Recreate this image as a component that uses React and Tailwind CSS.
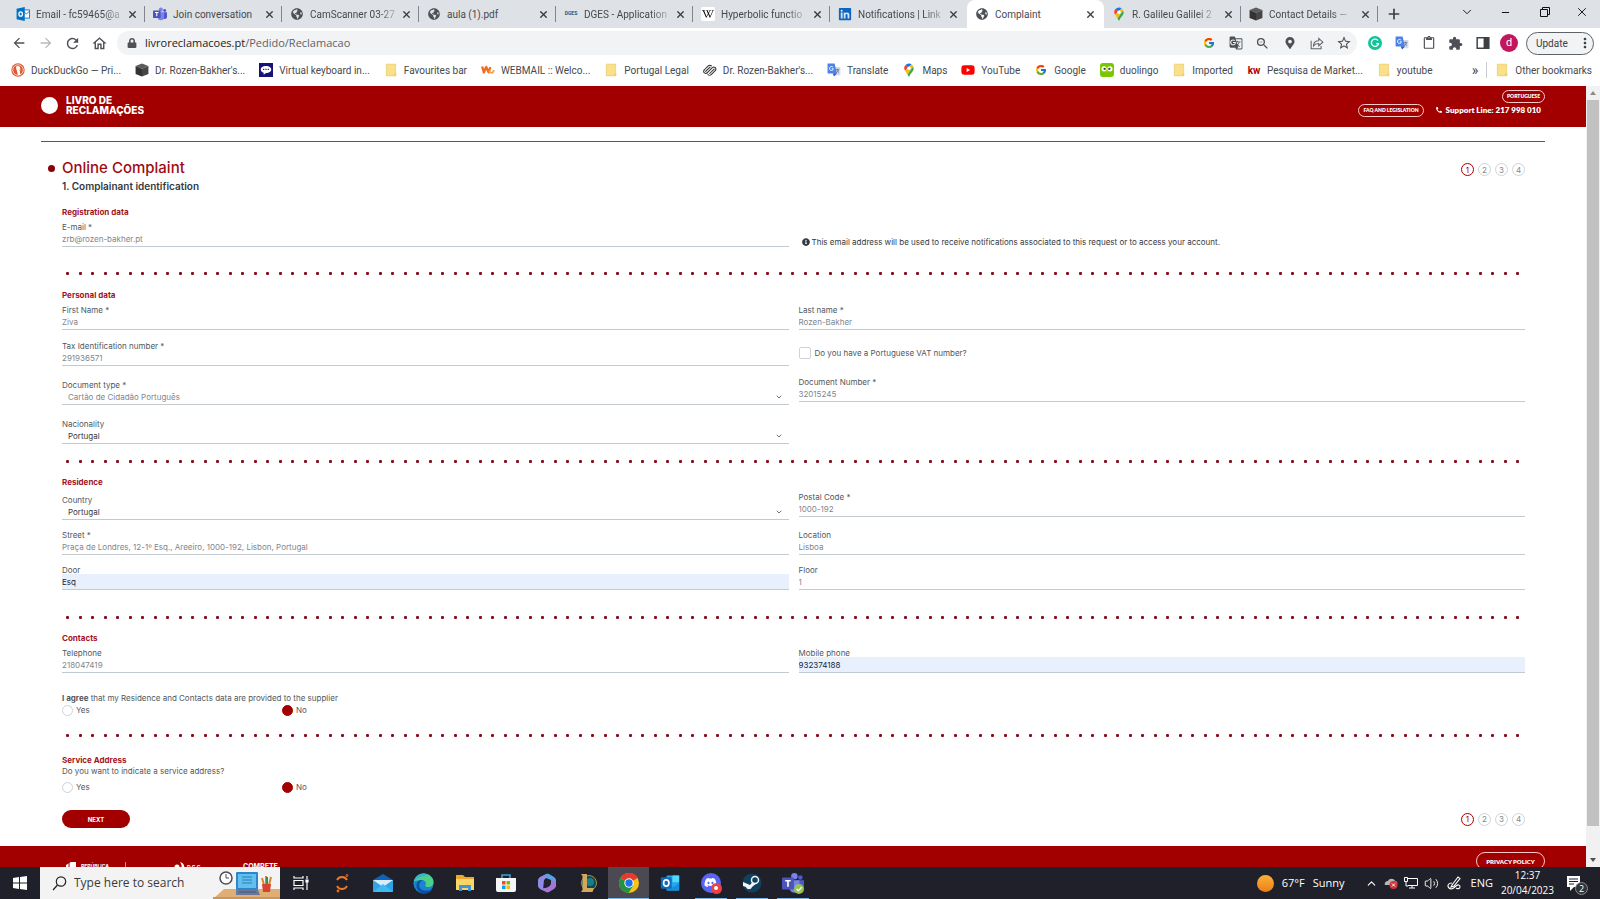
// src/App.jsx
// Complaint form (step 1) shown inside a browser window on a desktop.

import React, { useId, useState } from 'react';
import {
  FaGlobeAmericas,
  FaWikipediaW,
  FaLinkedin,
  FaYoutube,
  FaDiscord,
  FaMapMarkerAlt,
  FaPhoneAlt,
  FaInfoCircle,
  FaLock,
} from 'react-icons/fa';
import { FcGoogle } from 'react-icons/fc';
import {
  MdArrowBack,
  MdArrowForward,
  MdRefresh,
  MdOutlineHome,
  MdContentPaste,
  MdExtension,
  MdStarBorder,
  MdMoreVert,
  MdZoomOut,
  MdGTranslate,
} from 'react-icons/md';
import { Volume2, Plus, X, ChevronDown, ChevronUp, Minus } from 'lucide-react';

/* ---------- Icons ---------- */

const OutlookIcon = ({ size = 14 }) => (
  <svg width={size} height={size} viewBox="0 0 24 24" aria-hidden="true">
    <rect x="8" y="3" width="15" height="18" rx="1" fill="#28a8ea" />
    <rect x="15" y="3" width="8" height="8" fill="#50d9ff" />
    <path d="M8 12l7.500 5L23 12v9H8z" fill="#1490df" />
    <rect x="1" y="5" width="13" height="14" rx="1" fill="#0f6cbd" />
    <ellipse cx="7.500" cy="12" rx="3.200" ry="3.700" fill="none" stroke="#fff" strokeWidth="2" />
  </svg>
);

const OwaIcon = () => (
  <svg width="14" height="14" viewBox="0 0 24 24" aria-hidden="true">
    <rect x="11" y="5" width="12" height="14" fill="#fff" stroke="#0072c6" strokeWidth="1.500" />
    <path d="M12 7l6 5 5-5" fill="none" stroke="#0072c6" strokeWidth="1.500" />
    <path d="M1 3l14-3v24L1 21z" fill="#0072c6" />
    <ellipse cx="8" cy="12" rx="3" ry="3.800" fill="none" stroke="#fff" strokeWidth="2.200" />
  </svg>
);

const TeamsIcon = ({ size = 14, badge }) => (
  <svg width={size} height={size} viewBox="0 0 24 24" aria-hidden="true">
    <circle cx="20" cy="6" r="2.500" fill="#5059c9" />
    <circle cx="13.500" cy="4.500" r="3.500" fill="#7b83eb" />
    <path d="M16 9h8v7a4 4 0 0 1-8 1z" fill="#5059c9" />
    <path d="M8 9h11v8a5.500 5.500 0 0 1-11 0z" fill="#7b83eb" />
    <rect x="0" y="6" width="13" height="13" rx="1" fill="#4b53bc" />
    <path d="M3.500 9.500h6M6.500 9.500V16" stroke="#fff" strokeWidth="1.800" />
    {badge && (
      <>
        <circle cx="18.500" cy="18.500" r="5.500" fill="#92c353" />
        <path d="M16 18.500l2 2 3.500-4" fill="none" stroke="#fff" strokeWidth="1.500" />
      </>
    )}
  </svg>
);

const CubeIcon = () => (
  <svg width="14" height="14" viewBox="0 0 24 24" aria-hidden="true">
    <path d="M12 1l11 4-11 5L1 5z" fill="#5c5c5c" />
    <path d="M1 5l11 5v13L1 19z" fill="#333" />
    <path d="M23 5l-11 5v13l11-4z" fill="#464646" />
  </svg>
);

const FolderIcon = () => (
  <svg width="14" height="14" viewBox="0 0 24 24" aria-hidden="true">
    <path d="M4 2h16v20H4z" fill="#fbe08a" stroke="#e6c35c" />
    <path d="M17 22v-4h4v4z" fill="#f3cf63" />
  </svg>
);

const MapsIcon = () => (
  <svg width="14" height="14" viewBox="0 0 24 24" aria-hidden="true">
    <path d="M12 1a8 8 0 0 0-6 2.600l5 4.400 5.500-5.700A8 8 0 0 0 12 1z" fill="#1a73e8" />
    <path d="M6 3.600A8 8 0 0 0 5 13l6-5z" fill="#ea4335" />
    <path d="M5 13c1.500 2.500 3 4 4.500 6.500L19 6a8 8 0 0 0-2.500-3.700z" fill="#fbbc04" />
    <path d="M19 6c2 4 .500 7-2 10-2.500 3-3.500 5-5 8-.800-1.500-1.500-3-2.500-4.500z" fill="#34a853" />
    <circle cx="12" cy="9" r="3" fill="#fff" />
  </svg>
);

const TranslateIcon = () => (
  <svg width="14" height="14" viewBox="0 0 24 24" aria-hidden="true">
    <rect x="10" y="7" width="13" height="14" rx="1" fill="#d4dbe6" />
    <path d="M1 1h12l4 17H2a1 1 0 0 1-1-1z" fill="#4a82ea" />
    <path d="M12 23l5-5h-7z" fill="#2a56c6" />
    <path d="M10.500 7.500a3.400 3.400 0 1 0 .500 2.500H8" fill="none" stroke="#fff" strokeWidth="1.600" />
    <path d="M15 11h6M18 10v1.500M20 11.500c-.500 2.500-2 4-4 5M17 12c.500 2 2 3.500 3.500 4.500" stroke="#5a6b8a" strokeWidth="1.200" fill="none" />
  </svg>
);

const DuckIcon = () => (
  <svg width="14" height="14" viewBox="0 0 24 24" aria-hidden="true">
    <circle cx="12" cy="12" r="11.500" fill="#de5833" />
    <circle cx="12" cy="12" r="9" fill="none" stroke="#fff" strokeWidth="1.200" />
    <path d="M9 6c4-2 7 0 7 4l-1 2 1 8-4 1-2-8c-1-3-2-5-1-7z" fill="#fff" />
    <path d="M13 11l5 .500-4 2z" fill="#fdd20a" />
  </svg>
);

const ChatIcon = () => (
  <svg width="14" height="14" viewBox="0 0 24 24" aria-hidden="true">
    <rect width="24" height="24" fill="#17127a" />
    <path d="M12 5c5 0 9 2.500 9 6s-4 6-9 6l-4 3v-3.500C5 15.500 3 13.500 3 11c0-3.500 4-6 9-6z" fill="#fff" />
    <path d="M7 11h2M11 11h2M15 11h2" stroke="#17127a" strokeWidth="2" />
  </svg>
);

const WebmailIcon = () => (
  <svg width="14" height="14" viewBox="0 0 24 24" aria-hidden="true">
    <path d="M2 6l3 10 4-9 4 9 3-9" fill="none" stroke="#f26a21" strokeWidth="4" strokeLinejoin="round" />
    <path d="M14 13c2 6 7 5 8-1" fill="none" stroke="#f9a13a" strokeWidth="3" />
  </svg>
);

const SquarespaceIcon = () => (
  <svg width="14" height="14" viewBox="0 0 24 24" fill="none" stroke="#333" strokeWidth="1.800" strokeLinecap="round" aria-hidden="true">
    <path d="M2 12l7-7c1.500-1.500 4-1.500 5.500 0" />
    <path d="M4.500 14.500L12 7" />
    <path d="M7 17l9-9c1.500-1.500 3.500-1.500 5 0s1.500 3.500 0 5l-7 7c-1.500 1.500-4 1.500-5.500 0" />
    <path d="M19 10.500L11.500 18" />
    <path d="M2 12c-1.500 1.500-1 4 .500 5s3.500 1 4.500 0" />
  </svg>
);

const DuolingoIcon = () => (
  <svg width="14" height="14" viewBox="0 0 24 24" aria-hidden="true">
    <rect width="24" height="24" rx="5" fill="#78c800" />
    <circle cx="7" cy="10" r="4.500" fill="#fff" />
    <circle cx="17" cy="10" r="4.500" fill="#fff" />
    <circle cx="8" cy="10" r="2" fill="#444" />
    <circle cx="16" cy="10" r="2" fill="#444" />
    <path d="M10 13h4l-2 4z" fill="#ffb100" />
  </svg>
);

const GrammarlyIcon = () => (
  <svg width="14" height="14" viewBox="0 0 24 24" aria-hidden="true">
    <circle cx="12" cy="12" r="12" fill="#15c39a" />
    <path d="M17 8a6.200 6.200 0 1 0 1 5h-4" fill="none" stroke="#fff" strokeWidth="2.200" />
  </svg>
);

const ShareIcon = () => (
  <svg width="14" height="14" viewBox="0 0 24 24" fill="none" stroke="#5f6368" strokeWidth="1.800" aria-hidden="true">
    <path d="M2 8v14h17v-5" />
    <path d="M6 17c0-6 4-9 9-9V4l7 6.500-7 6.500v-4c-4 0-7 1-9 4z" />
  </svg>
);

const SidePanelIcon = () => (
  <svg width="14" height="14" viewBox="0 0 24 24" aria-hidden="true">
    <rect x="2" y="3" width="20" height="18" fill="none" stroke="#3c4043" strokeWidth="2.500" />
    <rect x="13" y="3" width="9" height="18" fill="#3c4043" />
  </svg>
);

const RestoreIcon = () => (
  <svg width="10" height="10" viewBox="0 0 10 10" fill="none" stroke="#111" aria-hidden="true">
    <path d="M.500 2.500h7v7h-7zM2.500 2.500v-2h7v7h-2" />
  </svg>
);

/* ---------- Browser chrome ---------- */

const globe = <FaGlobeAmericas size={12} className="text-[#4d5156]" />;

const TABS = [
  { title: 'Email - fc59465@a', icon: <OwaIcon />, fade: true },
  { title: 'Join conversation', icon: <TeamsIcon /> },
  { title: 'CamScanner 03-27', icon: globe, fade: true },
  { title: 'aula (1).pdf', icon: globe },
  {
    title: 'DGES - Application',
    icon: <span className="text-[5px] font-extrabold text-[#2b5f8f]">DGES</span>,
    fade: true,
  },
  {
    title: 'Hyperbolic functio',
    icon: (
      <span className="flex size-[14px] items-center justify-center rounded-xs bg-white">
        <FaWikipediaW size={12} />
      </span>
    ),
    fade: true,
  },
  { title: 'Notifications | Link', icon: <FaLinkedin size={14} className="text-[#0a66c2]" />, fade: true },
  { title: 'Complaint', icon: globe, active: true },
  { title: 'R. Galileu Galilei 2', icon: <MapsIcon />, fade: true },
  { title: 'Contact Details —', icon: <CubeIcon />, fade: true },
];

const TabStrip = () => (
  <div className="flex h-7 items-stretch bg-[#dee1e6] pl-2">
    {TABS.map((tab, i) => {
      const nextActive = TABS[i + 1] && TABS[i + 1].active;
      return (
        <div
          key={tab.title}
          className={`flex w-[137px] items-center gap-[6px] pr-2 pl-2 ${tab.active ? 'rounded-t-lg bg-white' : ''}`}
        >
          <span className="flex w-[14px] shrink-0 items-center justify-center">{tab.icon}</span>
          <span className="min-w-0 flex-1 text-[10px] whitespace-nowrap text-[#45494d]">
            <span className={tab.fade ? '[mask-image:linear-gradient(to_right,black_80%,rgb(0_0_0/0.3))]' : ''}>
              {tab.title}
            </span>
          </span>
          <button type="button" aria-label={`Close ${tab.title}`} className="flex">
            <X size={11} strokeWidth={3} className="text-[#3c4043]" />
          </button>
          {!tab.active && !nextActive && <span className="-mr-2 h-4 w-px bg-[#80868b]" />}
        </div>
      );
    })}
    <button type="button" aria-label="New tab" className="ml-2 flex items-center">
      <Plus size={16} strokeWidth={2.5} className="text-[#3c4043]" />
    </button>
    <div className="ml-auto flex items-center pb-1">
      <button type="button" aria-label="Search tabs" className="flex w-[39px] justify-center">
        <ChevronDown size={14} strokeWidth={1.5} />
      </button>
      <button type="button" aria-label="Minimize" className="flex w-[39px] justify-center">
        <Minus size={11} strokeWidth={2} />
      </button>
      <button type="button" aria-label="Restore" className="flex w-[39px] justify-center">
        <RestoreIcon />
      </button>
      <button type="button" aria-label="Close window" className="flex w-9 justify-center">
        <X size={14} strokeWidth={1.5} />
      </button>
    </div>
  </div>
);

const OMNIBOX_ACTIONS = [
  { label: 'Search with Google', icon: <FcGoogle size={12} /> },
  { label: 'Translate page', icon: <MdGTranslate size={14} /> },
  { label: 'Zoom', icon: <MdZoomOut size={15} /> },
  { label: 'Location', icon: <FaMapMarkerAlt size={12} /> },
  { label: 'Share', icon: <ShareIcon /> },
  { label: 'Bookmark', icon: <MdStarBorder size={16} /> },
];

const EXTENSIONS = [
  { label: 'Grammarly', icon: <GrammarlyIcon /> },
  { label: 'Google Translate', icon: <TranslateIcon /> },
  { label: 'Clipboard', icon: <MdContentPaste size={14} /> },
  { label: 'Extensions', icon: <MdExtension size={15} /> },
  { label: 'Side panel', icon: <SidePanelIcon /> },
];

const Toolbar = () => (
  <div className="flex h-[30px] items-center bg-white pr-[6px] pl-[5px] text-[#4d5156]">
    <button type="button" aria-label="Back" className="flex w-[27px] justify-center">
      <MdArrowBack size={16} />
    </button>
    <button type="button" aria-label="Forward" className="flex w-[27px] justify-center text-[#b6b9bd]">
      <MdArrowForward size={16} />
    </button>
    <button type="button" aria-label="Reload" className="flex w-[27px] justify-center">
      <MdRefresh size={17} />
    </button>
    <button type="button" aria-label="Home" className="flex w-[27px] justify-center">
      <MdOutlineHome size={17} />
    </button>
    <div className="ml-1 flex h-6 flex-1 items-center rounded-full bg-[#f1f3f4] pl-[10px]">
      <FaLock size={10} />
      <span className="ml-2 flex-1 font-['Open_Sans','Noto_Sans',sans-serif] text-[11px]">
        <span className="text-[#202124]">livroreclamacoes.pt</span>
        <span className="text-[#5f6368]">/Pedido/Reclamacao</span>
      </span>
      {OMNIBOX_ACTIONS.map((action) => (
        <button key={action.label} type="button" aria-label={action.label} className="flex w-[27px] justify-center">
          {action.icon}
        </button>
      ))}
    </div>
    <div className="ml-1 flex items-center">
      {EXTENSIONS.map((ext) => (
        <button key={ext.label} type="button" aria-label={ext.label} className="flex w-[27px] justify-center">
          {ext.icon}
        </button>
      ))}
      <button
        type="button"
        className="mx-1 flex size-[18px] items-center justify-center rounded-full bg-[#c2185b] text-[11px] text-white"
      >
        d
      </button>
      <button
        type="button"
        className="ml-1 flex h-[23px] w-[68px] items-center justify-between rounded-full border border-[#5f6368] bg-[#f1f3f4] pl-[9px] text-[10px] text-[#3c4043]"
      >
        Update
        <MdMoreVert size={16} />
      </button>
    </div>
  </div>
);

const BOOKMARKS = [
  { label: 'DuckDuckGo — Pri...', icon: <DuckIcon /> },
  { label: "Dr. Rozen-Bakher's...", icon: <CubeIcon /> },
  { label: 'Virtual keyboard in...', icon: <ChatIcon /> },
  { label: 'Favourites bar', icon: <FolderIcon /> },
  { label: 'WEBMAIL :: Welco...', icon: <WebmailIcon /> },
  { label: 'Portugal Legal', icon: <FolderIcon /> },
  { label: "Dr. Rozen-Bakher's...", icon: <SquarespaceIcon /> },
  { label: 'Translate', icon: <TranslateIcon /> },
  { label: 'Maps', icon: <MapsIcon /> },
  { label: 'YouTube', icon: <FaYoutube size={14} className="text-[#f00]" /> },
  { label: 'Google', icon: <FcGoogle size={12} /> },
  { label: 'duolingo', icon: <DuolingoIcon /> },
  { label: 'Imported', icon: <FolderIcon /> },
  { label: 'Pesquisa de Market...', icon: <span className="text-[10px] font-bold text-[#b40101]">kw</span> },
  { label: 'youtube', icon: <FolderIcon /> },
];

const BookmarkLink = ({ label, icon }) => (
  <a href="#" className="flex shrink-0 items-center gap-[6px]">
    <span className="flex w-[14px] justify-center">{icon}</span>
    {label}
  </a>
);

const BookmarksBar = () => (
  <nav className="flex h-7 items-center gap-[14px] overflow-hidden bg-white pr-2 pb-1 pl-[11px] text-[10px] whitespace-nowrap text-[#45494d]">
    {BOOKMARKS.map((b, i) => (
      <BookmarkLink key={i} label={b.label} icon={b.icon} />
    ))}
    <div className="ml-auto flex shrink-0 items-center gap-2">
      <button type="button" aria-label="More bookmarks" className="text-sm leading-3">
        »
      </button>
      <span className="h-4 w-px bg-[#c8cbcf]" />
      <BookmarkLink label="Other bookmarks" icon={<FolderIcon />} />
    </div>
  </nav>
);

/* ---------- Form pieces ---------- */

const Field = ({ label, defaultValue, type = 'text', filled }) => {
  const id = useId();
  return (
    <div className="flex flex-col self-start">
      <label htmlFor={id} className="-mb-[2px] leading-3">
        {label}
      </label>
      <input
        id={id}
        type={type}
        defaultValue={defaultValue}
        className={`h-4 w-full border-b border-[#c3cad0] outline-none ${
          filled ? 'bg-[#e8f0fe] text-[#1c2733]' : 'text-[#7f868c]'
        }`}
      />
    </div>
  );
};

const SelectField = ({ label, options, muted }) => {
  const id = useId();
  return (
    <div className="flex flex-col self-start pt-[3px]">
      <label htmlFor={id} className="-mb-[2px] leading-3">
        {label}
      </label>
      <div className="relative">
        <select
          id={id}
          className={`block h-4 w-full appearance-none border-b border-[#c3cad0] pl-[6px] outline-none ${
            muted ? 'text-[#7f868c]' : 'text-[#33393f]'
          }`}
        >
          {options.map((o) => (
            <option key={o}>{o}</option>
          ))}
        </select>
        <ChevronDown size={8} strokeWidth={2.5} className="pointer-events-none absolute right-[6px] bottom-1" />
      </div>
    </div>
  );
};

const YesNo = ({ name, legend }) => {
  const [value, setValue] = useState('No');
  return (
    <div role="radiogroup" aria-label={legend} className="flex h-3 items-center">
      {['Yes', 'No'].map((opt) => (
        <label key={opt} className="flex w-[220px] items-center gap-[3px]">
          <input
            type="radio"
            name={name}
            checked={value === opt}
            onChange={() => setValue(opt)}
            className="size-[11px] appearance-none rounded-full border border-[#cfd3d6] bg-white checked:border-[#a20000] checked:bg-[#a20000]"
          />
          {opt}
        </label>
      ))}
    </div>
  );
};

const Dots = () => (
  <div className="flex justify-between pr-[5px] pl-1" aria-hidden="true">
    {Array.from({ length: 117 }, (_, i) => (
      <span key={i} className="size-[3px] rounded-[1px] bg-[#8a0d1c]" />
    ))}
  </div>
);

const Heading = ({ children }) => <h3 className="text-[8px] leading-3 font-bold text-[#a3141c]">{children}</h3>;

const Steps = () => (
  <ol className="flex gap-1 text-[8px]">
    {[1, 2, 3, 4].map((n) => (
      <li
        key={n}
        className={`flex size-[13px] items-center justify-center rounded-full border ${
          n === 1 ? 'border-[#a20000] text-[#a20000]' : 'border-[#cfd3d6] text-[#7f868c]'
        }`}
      >
        {n}
      </li>
    ))}
  </ol>
);

const SiteHeader = () => (
  <header className="flex h-[41px] shrink-0 items-start justify-between bg-[#a20000] pr-[41px] pl-[41px] text-white">
    <div className="flex items-center gap-2 pt-[9px]">
      <span className="size-[17px] rounded-full bg-white" />
      <span className="flex flex-col text-[10px] leading-[10px] font-extrabold">
        <span>LIVRO DE</span>
        <span>RECLAMAÇÕES</span>
      </span>
    </div>
    <div className="flex flex-col items-end gap-px pt-1 font-['Lato','Open_Sans',sans-serif] font-extrabold">
      <a href="#" className="flex h-[13px] items-center rounded-full border border-[#ffc9c9] px-1 text-[5px]">
        PORTUGUESE
      </a>
      <div className="flex items-center gap-3 pr-1">
        <a href="#" className="flex h-[13px] items-center rounded-full border border-[#ffc9c9] px-1 text-[5px]">
          FAQ AND LEGISLATION
        </a>
        <span className="flex h-[13px] items-center gap-1 pb-[2px] text-[8px]">
          <FaPhoneAlt size={6} />
          Support Line: 217 998 010
        </span>
      </div>
    </div>
  </header>
);

const ComplaintForm = () => {
  const vatId = useId();
  return (
    <form className="flex flex-col pt-[18px] pr-[61px] pl-[62px] text-[8px] text-[#50575d]" onSubmit={(e) => e.preventDefault()}>
      <div className="flex items-end justify-between">
        <h1 className="-ml-[14px] flex items-center gap-[7px] text-[15px] leading-4 font-medium text-[#9d0b12]">
          <span className="size-[7px] rounded-full bg-[#8a0008]" />
          Online Complaint
        </h1>
        <Steps />
      </div>
      <h2 className="mt-1 text-[10px] leading-3 font-semibold text-[#33393f]">1. Complainant identification</h2>

      {/* Registration */}
      <section className="mt-[14px] mb-[25px] flex flex-col gap-[3px]">
        <Heading>Registration data</Heading>
        <div className="grid grid-cols-2 gap-x-[10px]">
          <Field label="E-mail *" type="email" defaultValue="zrb@rozen-bakher.pt" />
          <p className="flex items-center gap-[2px] pt-4 pl-[3px] leading-[10px] text-[#33393f]">
            <FaInfoCircle size={8} />
            This email address will be used to receive notifications associated to this request or to access your account.
          </p>
        </div>
      </section>
      <Dots />

      {/* Personal data */}
      <section className="mt-[14px] mb-4 flex flex-col gap-[3px]">
        <Heading>Personal data</Heading>
        <div className="grid grid-cols-2 gap-x-[10px] gap-y-[10px]">
          <Field label="First Name *" defaultValue="Ziva" />
          <Field label="Last name *" defaultValue="Rozen-Bakher" />
          <Field label="Tax Identification number *" defaultValue="291936571" />
          <div className="flex items-center gap-1 self-center">
            <input
              id={vatId}
              type="checkbox"
              className="size-3 appearance-none rounded-xs border border-[#cfd3d6] bg-white checked:bg-[#a20000]"
            />
            <label htmlFor={vatId}>Do you have a Portuguese VAT number?</label>
          </div>
          <SelectField label="Document type *" options={['Cartão de Cidadão Português']} muted />
          <Field label="Document Number *" defaultValue="32015245" />
          <SelectField label="Nacionality" options={['Portugal']} />
        </div>
      </section>
      <Dots />

      {/* Residence */}
      <section className="mt-[13px] mb-[26px] flex flex-col gap-[3px]">
        <Heading>Residence</Heading>
        <div className="grid grid-cols-2 gap-x-[10px] gap-y-[9px]">
          <SelectField label="Country" options={['Portugal']} />
          <Field label="Postal Code *" defaultValue="1000-192" />
          <Field label="Street *" defaultValue="Praça de Londres, 12-1º Esq., Areeiro, 1000-192, Lisbon, Portugal" />
          <Field label="Location" defaultValue="Lisboa" />
          <Field label="Door" defaultValue="Esq" filled />
          <Field label="Floor" defaultValue="1" />
        </div>
      </section>
      <Dots />

      {/* Contacts */}
      <section className="mt-[13px] mb-[18px] flex flex-col gap-[3px]">
        <Heading>Contacts</Heading>
        <div className="grid grid-cols-2 gap-x-[10px]">
          <Field label="Telephone" type="tel" defaultValue="218047419" />
          <Field label="Mobile phone" type="tel" defaultValue="932374188" filled />
        </div>
        <div className="mt-4">
          <p className="leading-3">
            <strong>I agree</strong> that my Residence and Contacts data are provided to the supplier
          </p>
          <YesNo name="agree" legend="Provide data to the supplier" />
        </div>
      </section>
      <Dots />

      {/* Service address */}
      <section className="mt-[17px] flex flex-col">
        <Heading>Service Address</Heading>
        <p className="mb-[5px] leading-[10px]">Do you want to indicate a service address?</p>
        <YesNo name="service" legend="Service address" />
      </section>

      <div className="mt-[17px] mb-[18px] flex items-center justify-between">
        <button type="submit" className="h-[18px] w-[68px] rounded-full bg-[#a20000] text-[6px] font-bold text-white">
          NEXT
        </button>
        <Steps />
      </div>
    </form>
  );
};

const SiteFooter = () => (
  <footer className="flex h-20 shrink-0 items-start justify-between bg-[#a20000] pr-[41px] pl-[65px] text-white">
    <div className="flex items-start pt-4 text-[5px] leading-[6px] font-bold">
      <svg width="12" height="12" viewBox="0 0 12 12" fill="#fff" aria-hidden="true">
        <path d="M1 3l5-3h5v7c0 3-3 5-5 5s-5-2-5-5z" />
        <path d="M4 1v9" stroke="#a20000" />
      </svg>
      <span className="ml-1 w-11 pt-px">REPÚBLICA</span>
      <span className="h-4 w-px bg-[#e08a8a]" />
      <svg width="11" height="12" viewBox="0 0 11 12" className="ml-12" fill="#fff" aria-hidden="true">
        <circle cx="3" cy="5" r="2.500" />
        <path d="M6 0c4 1 5 4 4 9L7 8c1-3 1-5-1-8z" />
      </svg>
      <span className="w-[58px] pt-[2px] pl-[2px]">D G C</span>
      <span className="pt-[2px] text-[7px]">COMPETE</span>
    </div>
    <a href="#" className="mt-[6px] flex h-[18px] w-[69px] items-center justify-center rounded-full border border-[#ffc9c9] font-['Lato','Open_Sans',sans-serif] text-[6px] font-extrabold">
      PRIVACY POLICY
    </a>
  </footer>
);

const Scrollbar = () => (
  <div className="flex w-[14px] shrink-0 flex-col items-center bg-[#f1f1f1]" aria-hidden="true">
    <svg width="14" height="14" viewBox="0 0 14 14" fill="#8a8a8a">
      <path d="M4 9l3-4 3 4z" />
    </svg>
    <div className="w-3 flex-1 bg-[#c1c1c1]" />
    <svg width="14" height="41" viewBox="0 0 14 41" fill="#505050">
      <path d="M4 32l3 4 3-4z" />
    </svg>
  </div>
);

/* ---------- Taskbar ---------- */

const TASKS = [
  {
    name: 'Task view',
    icon: (
      <svg width="16" height="16" viewBox="0 0 16 16" fill="none" stroke="#fff" strokeWidth="1.200">
        <path d="M1 1v2h9V1M1 15v-2h9v2M1 5.500h9v5H1zM14 1v3M14 7v8" />
        <path d="M13 5h2v2h-2z" fill="#fff" />
      </svg>
    ),
  },
  {
    name: 'Jupyter',
    icon: (
      <svg width="16" height="20" viewBox="0 0 16 20" fill="none" stroke="#f37726" strokeWidth="1.800">
        <path d="M3 7c2-4 8-4 10 0M3 13c2 4 8 4 10 0" />
        <circle cx="13" cy="2.500" r=".4" />
        <circle cx="4" cy="18" r=".5" />
      </svg>
    ),
  },
  {
    name: 'Mail',
    icon: (
      <svg width="22" height="20" viewBox="0 0 22 20">
        <path d="M1 7l10-6 10 6v12H1z" fill="#0f63b5" />
        <path d="M1 7h20v7H1z" fill="#d8ecf8" />
        <path d="M1 7l10 7 10-7v12H1z" fill="#2ea3e6" />
        <path d="M1 19l10-8 10 8z" fill="#40b8f4" />
      </svg>
    ),
  },
  {
    name: 'Edge',
    icon: (
      <svg width="21" height="21" viewBox="0 0 24 24">
        <circle cx="12" cy="12" r="11.500" fill="#1b84d2" />
        <path d="M1 10C2 4 7 .500 12 .500c7 0 11.500 5 11.500 9.500 0 4-3 6-6 6s-4-1.500-3-3c1-2-1-5-4.500-5S3 9 1 10z" fill="#4fd08a" />
        <path d="M1 10C2 4 7 .500 12 .500c3 0 5 1 6 2C11 3 4 6 1 10z" fill="#35b8c8" />
        <path d="M7 14c0-3 2-5 4-5.500-3-1-7 .500-7 6 0 5 4 9 9 9 4 0 7-2 9-5-6 3-15 2-15-4.500z" fill="#0c4fa0" />
      </svg>
    ),
  },
  {
    name: 'File Explorer',
    icon: (
      <svg width="20" height="18" viewBox="0 0 20 18">
        <path d="M1 1h7l2 2h9v13H1z" fill="#e8a92c" />
        <path d="M1 5h18v11H1z" fill="#fbd568" />
        <path d="M4 17v-6h12v6h-3v-3H7v3z" fill="#3f97d8" />
      </svg>
    ),
  },
  {
    name: 'Store',
    icon: (
      <svg width="20" height="20" viewBox="0 0 20 20">
        <path d="M6 6V2h8v4" fill="none" stroke="#3aa0d8" strokeWidth="1.600" />
        <path d="M0 5h20v12a2 2 0 0 1-2 2H2a2 2 0 0 1-2-2z" fill="#f6f6f6" />
        <path d="M6 8h3.500v3.500H6z" fill="#f25022" />
        <path d="M10.500 8H14v3.500h-3.500z" fill="#7fba00" />
        <path d="M6 12.500h3.500V16H6z" fill="#00a4ef" />
        <path d="M10.500 12.500H14V16h-3.500z" fill="#ffb900" />
      </svg>
    ),
  },
  {
    name: 'Microsoft 365',
    icon: (
      <svg width="20" height="20" viewBox="0 0 20 20">
        <path d="M9 1L3 4C2 5 1 6 1 7v6c0 1 1 2 2 3l3 1 1-10 5-5z" fill="#8e8be6" />
        <path d="M9 1c1-.500 2-.500 3 0l5 3c1 1 2 2 2 3v6l-5-4V7L9 5z" fill="#5b9fe6" />
        <path d="M19 9v4c0 1-1 2-2 3l-5 3c-1 .500-2 .500-3 0l-6-3 4-1c3 0 7-2 7-5V7z" fill="#a576d8" />
        <path d="M7 8l3-2 4 2v3l-4 2-3-1z" fill="#23222c" />
      </svg>
    ),
  },
  {
    name: 'League of Legends',
    icon: (
      <svg width="18" height="20" viewBox="0 0 18 20">
        <circle cx="10" cy="10" r="7.500" fill="#0b4a52" stroke="#b08a45" />
        <circle cx="11" cy="9" r="4" fill="#15808a" />
        <path d="M2 1h6v14h7l-1.500 4H2l1.500-2V3z" fill="#d1a85c" />
      </svg>
    ),
  },
  {
    name: 'Chrome',
    active: true,
    icon: (
      <svg width="20" height="20" viewBox="0 0 24 24">
        <circle cx="12" cy="12" r="12" fill="#fbc116" />
        <path d="M12 12L1.600 6A12 12 0 0 1 22.400 6z" fill="#e33b2e" />
        <path d="M12 0a12 12 0 0 1 10.400 6H12z" fill="#e33b2e" />
        <path d="M1.600 6A12 12 0 0 0 11.500 24L17 15l-5-3z" fill="#229342" />
        <circle cx="12" cy="12" r="5.600" fill="#fff" />
        <circle cx="12" cy="12" r="4.400" fill="#1a73e8" />
      </svg>
    ),
  },
  { name: 'Outlook', icon: <OutlookIcon size={20} /> },
  {
    name: 'Discord',
    running: true,
    icon: (
      <span className="relative flex size-5 items-center justify-center rounded-full bg-[#5865f2] text-white">
        <FaDiscord size={13} />
        <span className="absolute -right-px -bottom-px flex size-[11px] items-center justify-center rounded-full bg-[#ed4245]">
          <span className="size-1 rounded-full bg-white" />
        </span>
      </span>
    ),
  },
  {
    name: 'Steam',
    running: true,
    icon: (
      <svg width="20" height="20" viewBox="0 0 20 20">
        <circle cx="10" cy="10" r="9.500" fill="#11405f" />
        <path d="M1 9l7 3 4-5 3 3-5 4c-1 3-5 3-6 0l-3-1z" fill="#f2f6f9" />
        <circle cx="13" cy="7" r="3.500" fill="#11405f" stroke="#f2f6f9" strokeWidth="1.500" />
      </svg>
    ),
  },
  { name: 'Teams', running: true, icon: <TeamsIcon size={22} badge /> },
];

const SearchArt = () => (
  <svg width="67" height="32" viewBox="0 0 67 32" aria-hidden="true">
    <path d="M11 22h56v10H0z" fill="#dfae74" />
    <path d="M0 30h67v2H0z" fill="#c8955c" />
    <circle cx="13" cy="11" r="6" fill="#fff" stroke="#4a4f57" strokeWidth="1.500" />
    <path d="M13 7v4h3" fill="none" stroke="#4a4f57" />
    <rect x="23" y="5" width="22" height="18" rx="1" fill="#2f86c8" />
    <rect x="25" y="7" width="18" height="14" fill="#62c0ee" />
    <path d="M29 10h10M29 13h10M29 16h10" stroke="#2a7fb8" />
    <path d="M23 23h22l2 5H23z" fill="#69779a" />
    <path d="M26 25h17" stroke="#4b587a" />
    <path d="M51 18l-2-7M53 18V9M56 18l2-8" stroke="#c98a35" strokeWidth="2" />
    <path d="M54 17v-7" stroke="#3d8b53" strokeWidth="2" />
    <path d="M49 17h9l-1 8h-7z" fill="#d6432f" />
  </svg>
);

const Taskbar = () => {
  const searchId = useId();
  return (
    <footer className="z-10 flex h-8 shrink-0 items-stretch bg-[#20202a] font-['Open_Sans','Noto_Sans',sans-serif] text-white">
      <button type="button" aria-label="Start" className="flex w-10 items-center justify-center">
        <svg width="14" height="14" viewBox="0 0 14 14" fill="#fff">
          <path d="M0 2l6-.900V6.600H0zM7 1l7-1v6.600H7zM0 7.400h6v5.500L0 12zM7 7.400h7V14l-7-1z" />
        </svg>
      </button>
      <div className="flex w-60 items-center bg-[#f3f3f3] text-[#3a3a3a]">
        <label htmlFor={searchId} className="flex w-[34px] justify-center pl-1" aria-label="Search">
          <svg width="15" height="15" viewBox="0 0 15 15" fill="none" stroke="#222" strokeWidth="1.200">
            <circle cx="9" cy="5.500" r="4.700" />
            <path d="M5.500 9L1 14" />
          </svg>
        </label>
        <input
          id={searchId}
          type="text"
          placeholder="Type here to search"
          className="min-w-0 flex-1 bg-transparent text-xs outline-none placeholder:text-[#3a3a3a]"
        />
        <SearchArt />
      </div>
      {TASKS.map((task) => (
        <button
          key={task.name}
          type="button"
          aria-label={task.name}
          className={`flex w-[41px] flex-col items-center ${task.active ? 'bg-[#4b4a52]' : ''}`}
        >
          <span className="flex flex-1 items-center">{task.icon}</span>
          {task.active && <span className="h-px w-full bg-[#76b9ed]" />}
          {task.running && <span className="h-px w-8 bg-[#76b9ed]" />}
        </button>
      ))}
      <div className="ml-auto flex items-center text-[11px]">
        <span className="mr-2 size-[17px] rounded-full bg-gradient-to-b from-[#f9b233] to-[#ef7d1a]" />
        <span className="mr-2">67°F</span>
        <span className="mr-5">Sunny</span>
        <ChevronUp size={13} strokeWidth={2} className="mr-[6px]" />
        <svg width="14" height="14" viewBox="0 0 14 14" className="mr-[6px]">
          <path d="M1 9c-1-2 1-4 3-4 1-3 6-3 7 0 2 0 3 2 2 4z" fill="#b9b4b8" />
          <circle cx="9.500" cy="9" r="4" fill="#d13438" />
          <path d="M8 7.500l3 3M11 7.500l-3 3" stroke="#fff" />
        </svg>
        <svg width="14" height="12" viewBox="0 0 14 12" fill="none" stroke="#fff" className="mr-[6px]">
          <path d="M4 1.500h9.500v7H4M5 11h6M8 8.500V11M.500.500h3v4h-3zM2 4.500V9h2" />
        </svg>
        <Volume2 size={15} strokeWidth={1.5} className="mr-2" />
        <svg width="14" height="14" viewBox="0 0 14 14" fill="none" stroke="#fff" strokeWidth="1.100" className="mr-[10px]">
          <path d="M5 9l6-8 2 1.500L7 10l-3 1zM5 7C1 7 0 10 2 12s5 0 7-2 4-1 4 1-3 2-4 1" />
        </svg>
        <span className="mr-2">ENG</span>
        <span className="mr-3 text-center text-[10px] leading-[15px]">
          12:37
          <br />
          20/04/2023
        </span>
        <button type="button" aria-label="2 notifications" className="relative mr-3 flex h-6 w-[22px] items-start">
          <svg width="15" height="17" viewBox="0 0 15 17" className="mt-1">
            <path d="M1 1h13v11H8l-4 4v-4H1z" fill="#fff" />
            <path d="M3 4h9M3 6.500h9M3 9h5" stroke="#20202a" />
          </svg>
          <span className="absolute right-0 bottom-0 flex size-[13px] items-center justify-center rounded-full border border-[#8a8a90] bg-[#33333b] text-[9px]">
            2
          </span>
        </button>
      </div>
    </footer>
  );
};

export default function App() {
  return (
    <div className="flex h-screen flex-col overflow-hidden bg-white font-['Roboto','Noto_Sans',sans-serif]">
      <TabStrip />
      <Toolbar />
      <BookmarksBar />
      <div className="flex min-h-0 flex-1">
        <main className="flex min-w-0 flex-1 flex-col overflow-hidden font-['Inter','Liberation_Sans',sans-serif]">
          <SiteHeader />
          <div className="mx-[41px] mt-[14px] h-px shrink-0 bg-[#b0323c]" />
          <ComplaintForm />
          <SiteFooter />
        </main>
        <Scrollbar />
      </div>
      <Taskbar />
    </div>
  );
}
